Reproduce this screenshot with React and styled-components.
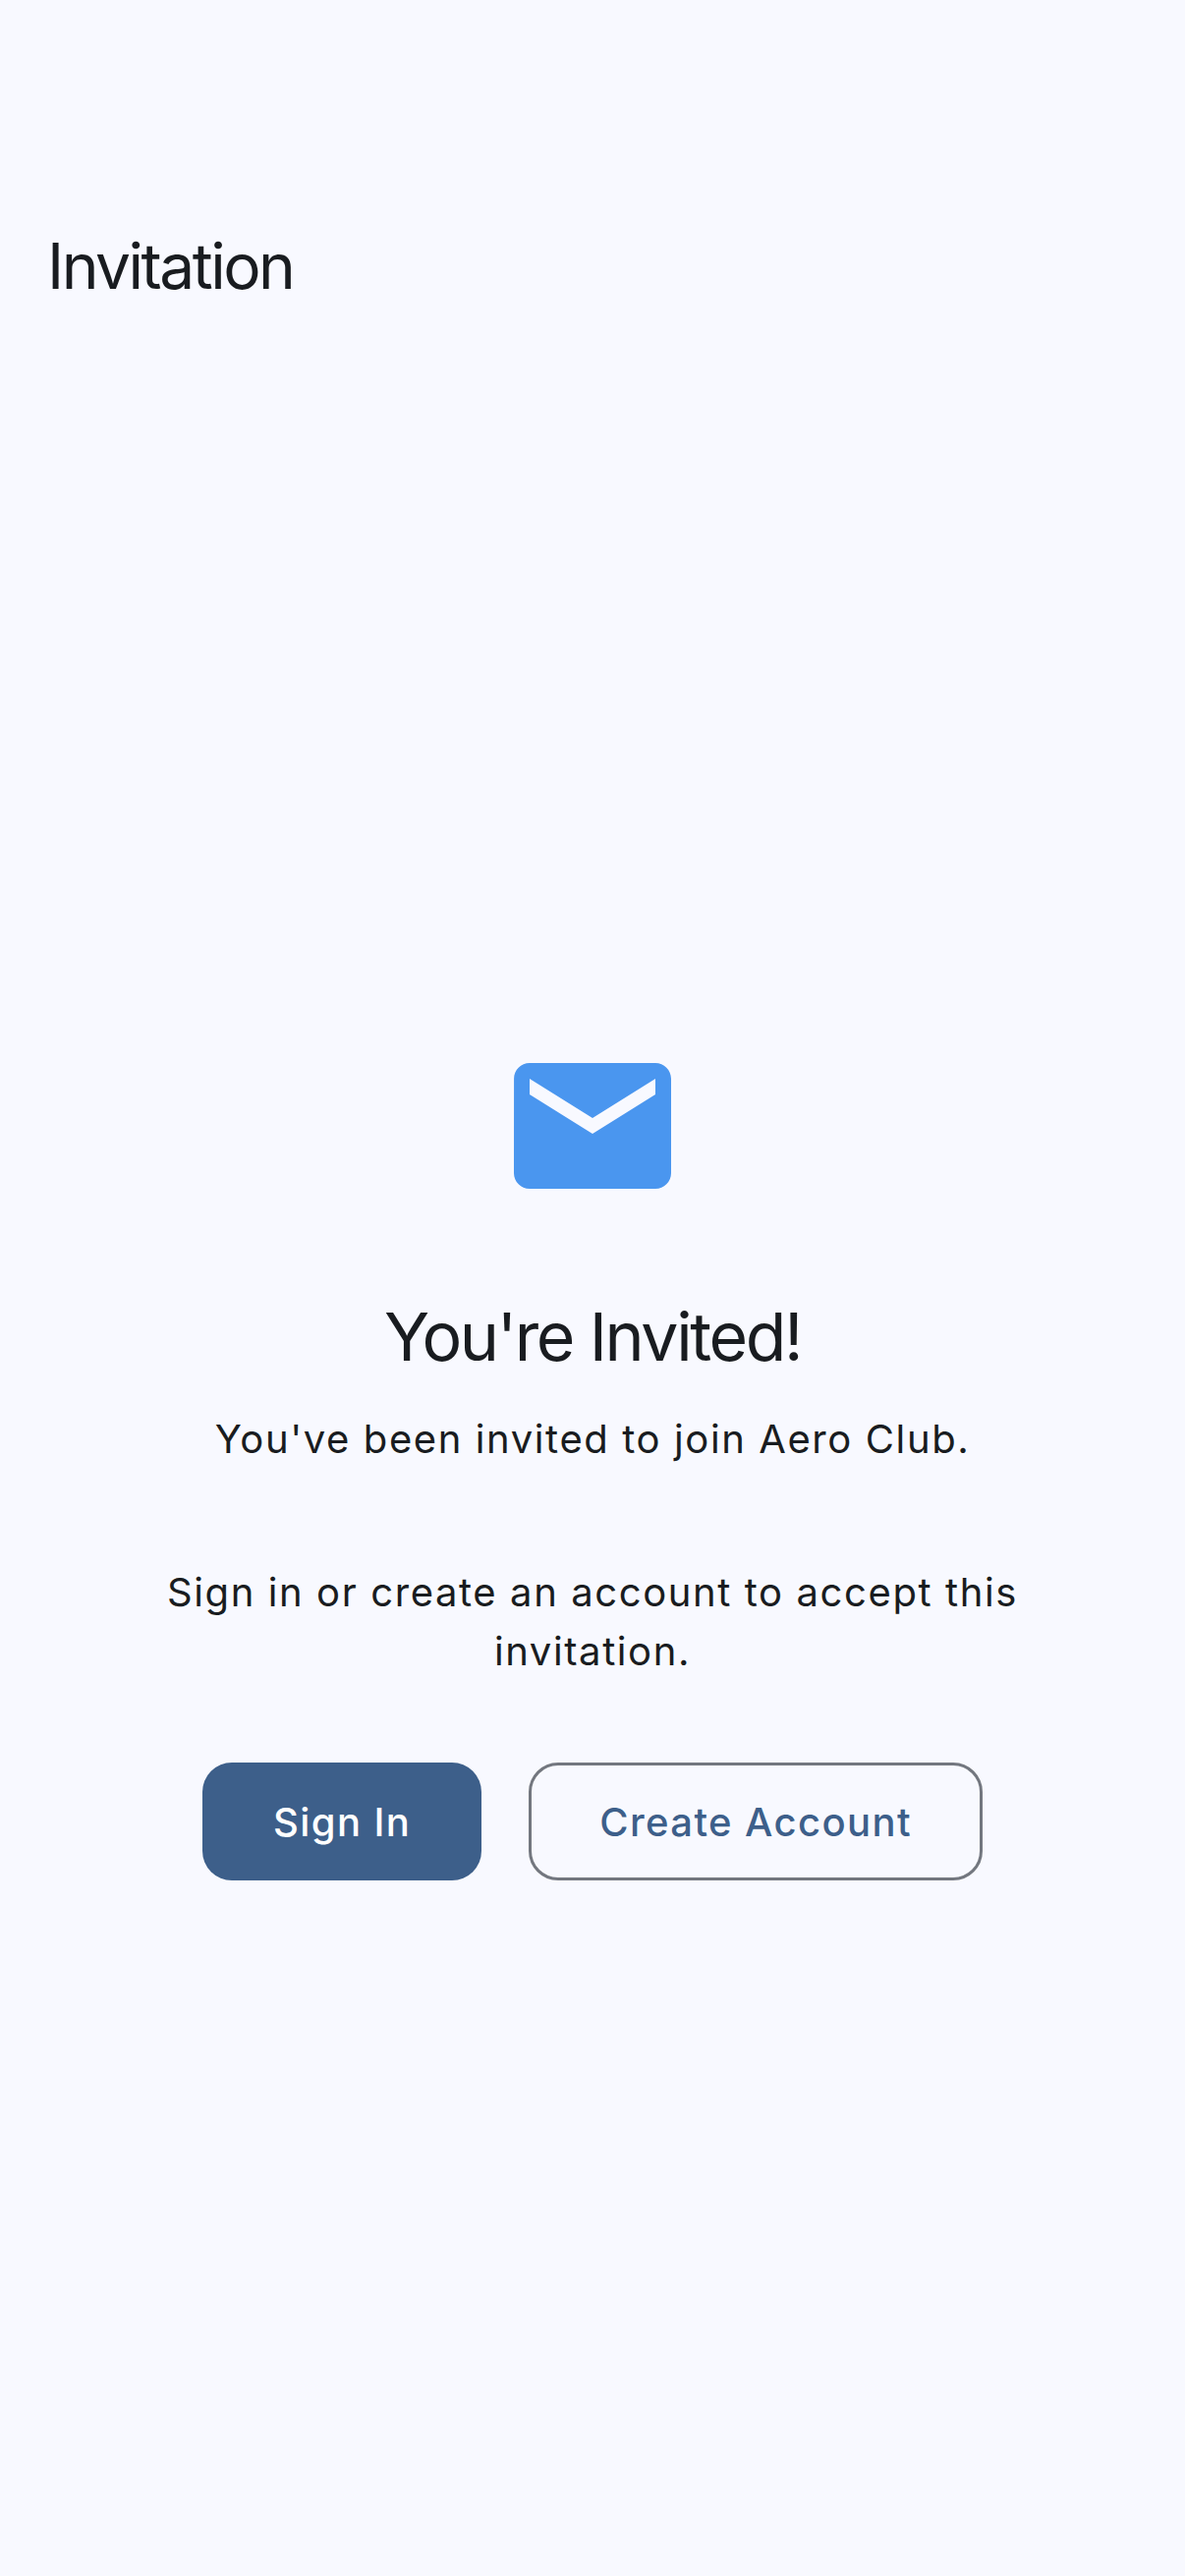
import React from 'react';
import styled, { createGlobalStyle } from 'styled-components';

const Global = createGlobalStyle`
  html, body { margin: 0; padding: 0; background: #f8f9ff; }
  * { box-sizing: border-box; }
`;

const Page = styled.div`
  width: 1206px;
  height: 2622px;
  display: flex;
  flex-direction: column;
  background: #f8f9ff;
  color: #191c20;
  font-family: Inter, "Liberation Sans", sans-serif;
`;

const Header = styled.header`
  height: 342px;
  padding: 199px 48px 0;
  flex: none;
`;

const PageTitle = styled.h1`
  margin: 0;
  font-size: 64px;
  line-height: 144px;
  font-weight: 400;
  letter-spacing: -2.5px;
`;

const Main = styled.main`
  flex: 1;
  display: flex;
  flex-direction: column;
  align-items: center;
  justify-content: center;
  padding: 0 144px;
`;

const MailIcon = styled.svg`
  display: block;
  width: 192px;
  height: 192px;
  fill: #4a96ef;
  margin-bottom: 76px;
`;

const Heading = styled.h2`
  margin: 0 0 33px;
  font-size: 68px;
  line-height: 84px;
  font-weight: 400;
  letter-spacing: -2.4px;
`;

const Text = styled.p`
  margin: 0 0 ${p => p.$gap}px;
  font-size: 40px;
  line-height: 60px;
  letter-spacing: 1.6px;
  text-align: center;
  font-weight: 400;
`;

const Actions = styled.div`
  display: flex;
  gap: 48px;
`;

const Button = styled.button`
  height: 120px;
  border-radius: 30px;
  padding: 0 ${p => (p.$filled ? 72 : 69)}px;
  font-family: inherit;
  font-size: 40px;
  font-weight: 450;
  letter-spacing: 1.4px;
  background: ${p => (p.$filled ? '#3d5f8a' : 'transparent')};
  color: ${p => (p.$filled ? '#ffffff' : '#3d5f8a')};
  border: ${p => (p.$filled ? 'none' : '3px solid #73777f')};
`;

export default function App() {
  return (
    <Page>
      <Global />
      <Header>
        <PageTitle>Invitation</PageTitle>
      </Header>
      <Main>
        <MailIcon viewBox="0 0 24 24">
          <path d="M20 4H4c-1.1 0-1.99.9-1.99 2L2 18c0 1.1.9 2 2 2h16c1.1 0 2-.9 2-2V6c0-1.1-.9-2-2-2zm0 4l-8 5-8-5V6l8 5 8-5v2z" />
        </MailIcon>
        <Heading>You're Invited!</Heading>
        <Text $gap={96}>You've been invited to join Aero Club.</Text>
        <Text $gap={83}>Sign in or create an account to accept this invitation.</Text>
        <Actions>
          <Button $filled>Sign In</Button>
          <Button>Create Account</Button>
        </Actions>
      </Main>
    </Page>
  );
}
